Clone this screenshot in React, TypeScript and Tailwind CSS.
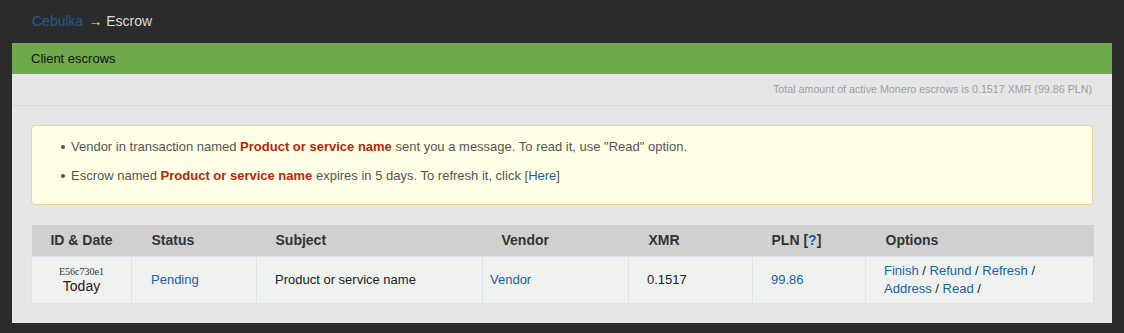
import React from 'react';

const link = 'text-[#1c5fa6]';

const App: React.FC = () => {
    return (
        <div className="min-h-[333px] bg-[#2b2b2b] px-3 pb-[11px] font-['Liberation_Sans',Arial,sans-serif]">
            <div className="h-[43px] flex items-center pl-5 text-[14px]">
                <span className="text-[#1d5a96]">Cebulka</span>
                <span className="text-[#dcdcdc] ml-[5px]">→ Escrow</span>
            </div>
            <div className="bg-[#6eaa4a] h-[31px] flex items-center pl-[19px] text-[13px] text-[#111]">Client escrows</div>
            <div className="bg-[#e6e6e6] pb-[19px]">
                <div className="h-[32px] border-b border-[#d3dbe3] flex items-center justify-end pr-5 text-[10.7px] text-[#a0a0a0]">
                    Total amount of active Monero escrows is 0.1517 XMR (99.86 PLN)
                </div>
                <div className="px-[19px] pt-[19px]">
                    <div className="h-[80px] bg-[#ffffe6] border border-[#e9d594] rounded-[4px] pl-[29px] pt-[6px] text-[13px] text-[#555]">
                        <ul>
                            <li className="h-[29px] flex items-center">
                                <span className="w-[4px] h-[4px] rounded-full bg-[#555] mr-[6px]" />
                                <span>Vendor in transaction named <b className="text-[#b8260b]">Product or service name</b> sent you a message. To read it, use "Read" option.</span>
                            </li>
                            <li className="h-[29px] flex items-center">
                                <span className="w-[4px] h-[4px] rounded-full bg-[#555] mr-[6px]" />
                                <span>Escrow named <b className="text-[#b8260b]">Product or service name</b> expires in 5 days. To refresh it, click [<span className={link}>Here</span>]</span>
                            </li>
                        </ul>
                    </div>
                    <table className="mt-5 w-[1062px] border-collapse table-fixed text-[13px] text-[#222]">
                        <colgroup>
                            <col className="w-[100px]" />
                            <col className="w-[125px]" />
                            <col className="w-[226px]" />
                            <col className="w-[146px]" />
                            <col className="w-[124px]" />
                            <col className="w-[113px]" />
                            <col className="w-[228px]" />
                        </colgroup>
                        <thead>
                            <tr className="bg-[#d0d0d0] h-[31px] text-[14px] font-bold text-[#333] text-left">
                                <th className="text-center">ID &amp; Date</th>
                                <th className="pl-5">Status</th>
                                <th className="pl-[19px]">Subject</th>
                                <th className="pl-[19px]">Vendor</th>
                                <th className="pl-5">XMR</th>
                                <th className="pl-[19px]">PLN [<span className={link}>?</span>]</th>
                                <th className="pl-5">Options</th>
                            </tr>
                        </thead>
                        <tbody>
                            <tr className="bg-[#eff1ef] h-[47px]">
                                <td className="border border-[#dce3e9] text-center leading-none">
                                    <div className="font-['Liberation_Serif',serif] text-[10px] text-[#333]">E56c730e1</div>
                                    <div className="text-[14px] mt-[2px] text-[#222]">Today</div>
                                </td>
                                <td className={`border border-[#dce3e9] pl-[19px] ${link}`}>Pending</td>
                                <td className="border border-[#dce3e9] pl-[18px]">Product or service name</td>
                                <td className={`border border-[#dce3e9] pl-[7px] ${link}`}>Vendor</td>
                                <td className="border border-[#dce3e9] pl-[18px]">0.1517</td>
                                <td className={`border border-[#dce3e9] pl-[18px] ${link}`}>99.86</td>
                                <td className="border border-[#dce3e9] pl-[18px] leading-[18px]">
                                    <div className="w-[170px]">
                                        <span className={link}>Finish</span> / <span className={link}>Refund</span> / <span className={link}>Refresh</span> / <span className={link}>Address</span> / <span className={link}>Read</span> /
                                    </div>
                                </td>
                            </tr>
                        </tbody>
                    </table>
                </div>
            </div>
        </div>
    );
};

export default App;
